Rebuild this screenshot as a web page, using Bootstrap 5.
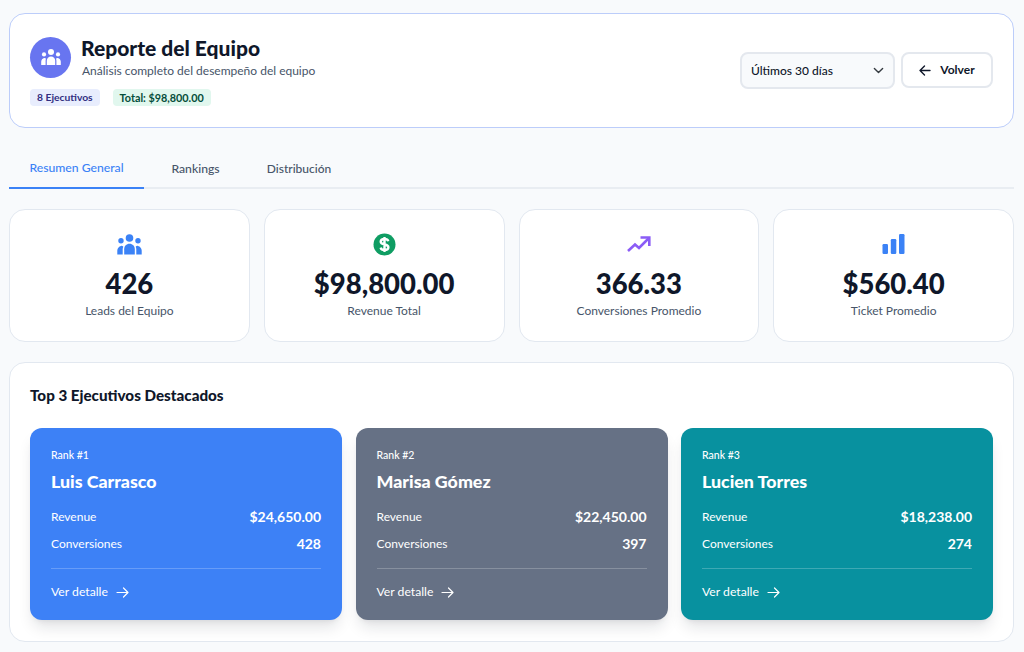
<!DOCTYPE html>
<html lang="es">
<head>
<meta charset="utf-8">
<title>Reporte del Equipo</title>
<link href="https://cdn.jsdelivr.net/npm/bootstrap@5.3.0/dist/css/bootstrap.min.css" rel="stylesheet">
<style>
html,body{height:652px;overflow:hidden}
body{background:#f8fafc;font-family:"Lato","Noto Sans",sans-serif;color:#0f172a;padding:13px 10px 0 9px}
.hero{height:115px;background:#fff;border:1px solid #bccdfa;border-radius:16px;padding:0 20px}
.hero-id{gap:10px}
.avatar{width:41px;height:41px;border-radius:50%;background:#6875f0;color:#fff}
.hero-title{font-size:21px;font-weight:900;line-height:26px;margin:0}
.hero-sub{font-size:12px;color:#475569;line-height:16px;margin-top:2px;padding-left:1px}
.chips{gap:13px;margin-top:10px}
.chip{font-size:10.3px;font-weight:700;border-radius:4px;height:17px;line-height:17px;padding:0 7px}
.chip-a{background:#e8edfd;color:#312e81}
.chip-b{background:#e1f7ee;color:#064e3b;font-size:10.8px}
.actions{gap:6px}
.range{width:155px;height:37px;font-size:12px;font-weight:500;background-color:#f8fafc;background-position:right 8px center;background-size:13px 11px;border:2px solid #e4e8ee;border-radius:8px;color:#0f172a;padding:0 28px 0 9px;box-shadow:none}
.back{width:92px;height:36px;font-size:12px;font-weight:700;background:#fff;border:2px solid #e4e8ee;border-radius:8px;color:#0f172a;padding:0;gap:9px}
.tabs{margin-top:22px;height:39px;border-bottom:2px solid #e9edf2;flex-wrap:nowrap}
.tabs .nav-link{border:0;border-bottom:2px solid transparent;margin-bottom:-2px;height:39px;padding:0;line-height:37px;font-size:12.2px;font-weight:500;color:#475569;background:none;border-radius:0;width:135px;text-align:center;white-space:nowrap}
.tabs .nav-item:nth-child(2) .nav-link{width:103px}
.tabs .nav-item:nth-child(3) .nav-link{width:104px;font-size:12px}
.tabs .nav-link.active{color:#3b82f6;border-bottom-color:#3b82f6;background:none;line-height:35px}
.stats{display:grid;grid-template-columns:repeat(4,1fr);gap:14px;margin-top:20px}
.stat{height:133px;background:#fff;border:1px solid #e2e8f0;border-radius:16px;padding-top:20px}
.stat-ico{height:28px}
.stat-val{font-size:27.5px;font-weight:900;line-height:34px;margin-top:9px}
.stat-lbl{font-size:12px;color:#475569;line-height:16px;margin-top:2px}
.panel{height:280px;margin-top:20px;background:#fff;border:1px solid #e2e8f0;border-radius:16px;padding:21px 20px 0}
.panel-title{font-size:15.2px;font-weight:900;line-height:22px;margin:0 0 22px}
.tops{display:grid;grid-template-columns:repeat(3,1fr);gap:13.5px}
.top{height:192px;border:0;border-radius:12px;padding:20px 21px 0;color:#fff;box-shadow:0 10px 15px -3px rgba(15,23,42,.12),0 4px 6px -4px rgba(15,23,42,.1)}
.t-blue{background:#3d81f6}
.t-slate{background:#667185}
.t-teal{background:#08919f}
.t-rank{font-size:10.5px;font-weight:500;line-height:14px}
.t-name{font-size:17.8px;font-weight:900;line-height:24px;margin:7px 0 15px}
.t-row{font-size:12px;line-height:18px;margin-bottom:9px}
.t-row b{font-size:14px;font-weight:700}
.t-link{font-size:12.2px;color:#fff;text-decoration:none;line-height:18px;gap:8px}
.t-sep{height:1px;background:rgba(255,255,255,.22);margin:15px 0 9px}
</style>
</head>
<body>
<header class="hero d-flex align-items-center justify-content-between">
  <div>
    <div class="d-flex align-items-center hero-id">
      <div class="avatar d-flex align-items-center justify-content-center flex-shrink-0">
        <svg width="20" height="17" viewBox="0 0 20 17" fill="currentColor"><circle cx="10" cy="3" r="3"/><circle cx="3" cy="5.400" r="2.100"/><circle cx="17" cy="5.400" r="2.100"/><path d="M5.800 16v-4.200C5.800 9.200 7.600 7.400 10 7.400s4.200 1.800 4.200 4.400V16z"/><path d="M4.600 16H.2v-3.200c0-1.900 1.300-3.300 3-3.700 1-.1 1.400.2 1.800.6-.3.7-.4 1.400-.4 2.100z"/><path d="M15.400 16h4.400v-3.200c0-1.900-1.300-3.300-3-3.700-1-.1-1.400.2-1.800.6.300.7.400 1.400.400 2.100z"/></svg>
      </div>
      <div>
        <h1 class="hero-title">Reporte del Equipo</h1>
        <div class="hero-sub">Análisis completo del desempeño del equipo</div>
      </div>
    </div>
    <div class="d-flex chips">
      <span class="chip chip-a">8 Ejecutivos</span>
      <span class="chip chip-b">Total: $98,800.00</span>
    </div>
  </div>
  <div class="d-flex align-items-start actions">
    <select class="form-select range"><option>Últimos 30 días</option></select>
    <button class="btn back d-inline-flex align-items-center justify-content-center">
      <svg width="12" height="11" viewBox="0 0 12 11" fill="none" stroke="currentColor" stroke-width="1.400" stroke-linecap="round" stroke-linejoin="round"><path d="M11 5.500H1M5.500 1 1 5.500 5.500 10"/></svg>Volver
    </button>
  </div>
</header>

<ul class="nav tabs">
  <li class="nav-item"><a class="nav-link active" href="#">Resumen General</a></li>
  <li class="nav-item"><a class="nav-link" href="#">Rankings</a></li>
  <li class="nav-item"><a class="nav-link" href="#">Distribución</a></li>
</ul>

<section class="stats">
  <div class="stat text-center">
    <div class="stat-ico d-flex justify-content-center align-items-center">
      <svg width="25" height="21" viewBox="0 0 25 21" fill="#3b82f6"><circle cx="12.500" cy="4" r="3.800"/><circle cx="4" cy="6.800" r="2.700"/><circle cx="21" cy="6.800" r="2.700"/><path d="M7.200 20.500v-5.300c0-3.200 2.200-5.500 5.300-5.500s5.300 2.300 5.300 5.500v5.300z"/><path d="M5.700 20.500H.3v-4c0-2.300 1.600-4.100 3.700-4.600 1.200-.2 1.800.3 2.300.8-.4.800-.6 1.700-.6 2.600z"/><path d="M19.300 20.500h5.400v-4c0-2.300-1.600-4.100-3.700-4.600-1.200-.2-1.800.3-2.300.8.400.8.600 1.700.6 2.600z"/></svg>
    </div>
    <div class="stat-val">426</div>
    <div class="stat-lbl">Leads del Equipo</div>
  </div>
  <div class="stat text-center">
    <div class="stat-ico d-flex justify-content-center align-items-center">
      <svg width="23" height="23" viewBox="0 0 23 23"><circle cx="11.500" cy="11.500" r="11" fill="#0f9d63"/><path d="M15.300 8.200c-.4-1.500-1.900-2.200-3.800-2.200-2.200 0-3.800 1-3.800 2.800 0 3.800 7.700 1.700 7.700 5.400 0 1.800-1.700 2.800-3.900 2.800-2 0-3.500-.9-3.900-2.400M11.500 4v15" fill="none" stroke="#fff" stroke-width="2.400"/></svg>
    </div>
    <div class="stat-val">$98,800.00</div>
    <div class="stat-lbl">Revenue Total</div>
  </div>
  <div class="stat text-center">
    <div class="stat-ico d-flex justify-content-center align-items-center">
      <svg width="24" height="16" viewBox="0 0 24 16" fill="none" stroke="#8b5cf6" stroke-width="2.600" stroke-linejoin="miter"><path d="M1 15 8 8.500l4 3.500L22 2"/><path d="M13.500 1.500H22.300V10"/></svg>
    </div>
    <div class="stat-val">366.33</div>
    <div class="stat-lbl">Conversiones Promedio</div>
  </div>
  <div class="stat text-center">
    <div class="stat-ico d-flex justify-content-center align-items-center">
      <svg width="23" height="20" viewBox="0 0 23 20" fill="#3b82f6"><rect x="0.500" y="10" width="5.500" height="10" rx="1.200"/><rect x="8.800" y="5" width="5.500" height="15" rx="1.200"/><rect x="17" y="0" width="5.500" height="20" rx="1.200"/></svg>
    </div>
    <div class="stat-val">$560.40</div>
    <div class="stat-lbl">Ticket Promedio</div>
  </div>
</section>

<section class="panel">
  <h2 class="panel-title">Top 3 Ejecutivos Destacados</h2>
  <div class="tops">
    <article class="top t-blue">
      <div class="t-rank">Rank #1</div>
      <div class="t-name">Luis Carrasco</div>
      <div class="t-row d-flex justify-content-between align-items-center"><span>Revenue</span><b>$24,650.00</b></div>
      <div class="t-row d-flex justify-content-between align-items-center"><span>Conversiones</span><b>428</b></div>
      <div class="t-sep"></div>
      <a class="t-link d-inline-flex align-items-center" href="#">Ver detalle <svg width="13" height="11" viewBox="0 0 13 11" fill="none" stroke="currentColor" stroke-width="1.200" stroke-linecap="round" stroke-linejoin="round"><path d="M1 5.500h11M7.500 1 12 5.500 7.500 10"/></svg></a>
    </article>
    <article class="top t-slate">
      <div class="t-rank">Rank #2</div>
      <div class="t-name">Marisa Gómez</div>
      <div class="t-row d-flex justify-content-between align-items-center"><span>Revenue</span><b>$22,450.00</b></div>
      <div class="t-row d-flex justify-content-between align-items-center"><span>Conversiones</span><b>397</b></div>
      <div class="t-sep"></div>
      <a class="t-link d-inline-flex align-items-center" href="#">Ver detalle <svg width="13" height="11" viewBox="0 0 13 11" fill="none" stroke="currentColor" stroke-width="1.200" stroke-linecap="round" stroke-linejoin="round"><path d="M1 5.500h11M7.500 1 12 5.500 7.500 10"/></svg></a>
    </article>
    <article class="top t-teal">
      <div class="t-rank">Rank #3</div>
      <div class="t-name">Lucien Torres</div>
      <div class="t-row d-flex justify-content-between align-items-center"><span>Revenue</span><b>$18,238.00</b></div>
      <div class="t-row d-flex justify-content-between align-items-center"><span>Conversiones</span><b>274</b></div>
      <div class="t-sep"></div>
      <a class="t-link d-inline-flex align-items-center" href="#">Ver detalle <svg width="13" height="11" viewBox="0 0 13 11" fill="none" stroke="currentColor" stroke-width="1.200" stroke-linecap="round" stroke-linejoin="round"><path d="M1 5.500h11M7.500 1 12 5.500 7.500 10"/></svg></a>
    </article>
  </div>
</section>
<script src="https://cdn.jsdelivr.net/npm/bootstrap@5.3.0/dist/js/bootstrap.bundle.min.js"></script>
</body>
</html>
